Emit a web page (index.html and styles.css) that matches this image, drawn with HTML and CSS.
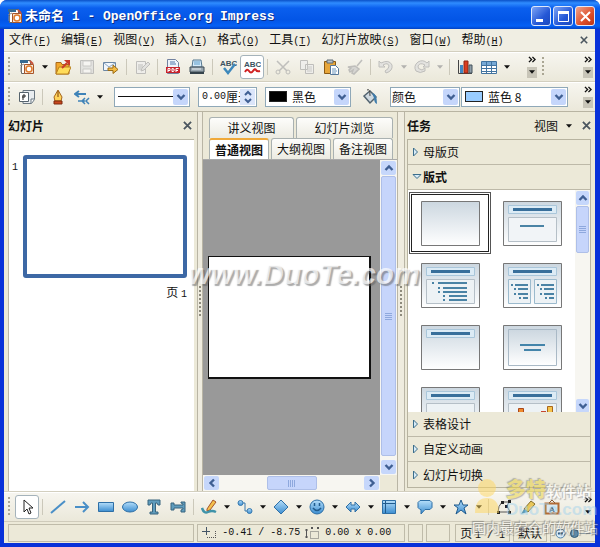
FILE: index.html
```html
<!DOCTYPE html>
<html lang="zh-CN">
<head>
  <meta charset="UTF-8">
  <title>未命名 1 - OpenOffice.org Impress</title>
  <link rel="stylesheet" href="styles.css">
</head>
<body>

  <!-- shared shapes -->
  <svg class="defs" width="0" height="0" aria-hidden="true">
    <defs>
      <linearGradient id="sky" x1="0" y1="0" x2="0" y2="1"><stop offset="0" stop-color="#b5defa"/><stop offset="1" stop-color="#3b8dd0"/></linearGradient>
      <linearGradient id="page" x1="0" y1="0" x2="0" y2="1"><stop offset="0" stop-color="#ccd7e0"/><stop offset="1" stop-color="#ffffff"/></linearGradient>
    </defs>
    <symbol id="caret" viewBox="0 0 7 4"><path d="M0 0h7L3.500 4z" fill="currentColor"/></symbol>
    <symbol id="down" viewBox="0 0 10 10"><path d="M1.500 3l3.500 3.500L8.500 3" fill="none" stroke="#3f5f93" stroke-width="2.400"/></symbol>
    <symbol id="close" viewBox="0 0 10 10"><path d="M1 1l8 8M9 1l-8 8" stroke="#4b565f" stroke-width="2"/></symbol>
    <symbol id="more" viewBox="0 0 9 8"><path d="M1 1l3 3-3 3M5 1l3 3-3 3" fill="none" stroke="#111" stroke-width="1.600"/></symbol>
    <symbol id="fold" viewBox="0 0 8 10"><path d="M1.500 1v8l4-4z" fill="#d8ecf8" stroke="#3c6e8c"/></symbol>
    <symbol id="newdoc" viewBox="0 0 16 16"><path d="M2.500 1.500h9v13h-9z" fill="#fff" stroke="#666"/><path d="M1 1h8v3H1z" fill="#376b93"/><path d="M1 7l4-2M2 8v5" stroke="#888"/><path d="M5.500 5.500h9v9h-9z" fill="#f3e6d8" stroke="#a8562a"/><circle cx="10" cy="10" r="3" fill="#fff" stroke="#e07b2c" stroke-width="1.500"/><path d="M11 2l3 3" stroke="#c8523a" stroke-width="2"/></symbol>
  </svg>

  <div class="window">
    <header class="title-bar">
      <svg class="app-icon" width="16" height="16"><use href="#newdoc"/></svg>
      <h1>未命名<span> 1 - OpenOffice.org Impress</span></h1>
      <button class="win-btn" aria-label="最小化"><svg width="19" height="19"><path d="M4 12h7v3H4z" fill="#fff"/></svg></button>
      <button class="win-btn" aria-label="最大化"><svg width="19" height="19"><path d="M4.500 5.500h10v9h-10z" fill="none" stroke="#fff"/><path d="M4 4h11v3H4z" fill="#fff"/></svg></button>
      <button class="win-btn win-close" aria-label="关闭"><svg width="19" height="19"><path d="M5 5l9 9M14 5l-9 9" stroke="#fff" stroke-width="2"/></svg></button>
    </header>

    <nav class="menu-bar">
      <button>文件<span>(<u>F</u>)</span></button>
      <button>编辑<span>(<u>E</u>)</span></button>
      <button>视图<span>(<u>V</u>)</span></button>
      <button>插入<span>(<u>I</u>)</span></button>
      <button>格式<span>(<u>O</u>)</span></button>
      <button>工具<span>(<u>T</u>)</span></button>
      <button>幻灯片放映<span>(<u>S</u>)</span></button>
      <button>窗口<span>(<u>W</u>)</span></button>
      <button>帮助<span>(<u>H</u>)</span></button>
      <button class="push" aria-label="关闭文档"><svg width="8" height="8"><use href="#close"/></svg></button>
    </nav>

    <div class="toolbar">
      <span class="grip"></span>
      <button class="tool" aria-label="新建"><svg width="16" height="16"><use href="#newdoc"/></svg></button>
      <button class="drop" aria-label="新建选项"><svg width="6" height="4"><use href="#caret"/></svg></button>
      <button class="tool" aria-label="打开"><svg width="16" height="16"><path d="M1 3.500h5l1 2h7V15H1z" fill="#f2a72c" stroke="#a8681a"/><path d="M1 15l3-7h12l-3 7z" fill="#ffdc5a" stroke="#b9821f"/><path d="M7 9l5-5" stroke="#c93b2b" stroke-width="2"/><path d="M9 1h6v6z" fill="#c93b2b"/></svg></button>
      <button class="tool off" aria-label="保存"><svg width="16" height="16"><path d="M1.500 1.500h13v13h-13z" fill="#ddd" stroke="#aaa"/><path d="M4 2h8v5H4zM4 10h8v4H4z" fill="#f8f8f8" stroke="#bbb"/></svg></button>
      <button class="tool" aria-label="电子邮件"><svg width="16" height="16"><path d="M.5 3.500h12v8H.5z" fill="#f1f6fb" stroke="#6b87a5"/><path d="M1 4l5 4 6-4" fill="none" stroke="#8ea9c4"/><path d="M5 9h5V6l5 4.500-5 4v-3H5z" fill="#f5bd45" stroke="#9a6b14"/></svg></button>
      <span class="sep"></span>
      <button class="tool off" aria-label="编辑文件"><svg width="16" height="16"><path d="M2.500 2.500h9v12h-9z" fill="#eee" stroke="#aaa"/><path d="M4 6h5M4 8h5M4 10h3M7 12l1-3 6-6 2 2-6 6z" fill="#ddd" stroke="#aaa"/></svg></button>
      <span class="sep"></span>
      <button class="tool" aria-label="导出为 PDF"><svg width="16" height="16"><path d="M2.500.5h8l3 3v11h-11z" fill="#eef3fa" stroke="#7282a0"/><path d="M5 3h5M5 5h6" stroke="#4f75a8"/><path d="M1 8h14v6H1z" fill="#c8232c"/><path d="M3 13V9.500h2v2H3M7 9.500v3h1.500l.5-.5v-2zM11 13V9.500h2.500M11 11.500h2" fill="none" stroke="#fff"/></svg></button>
      <button class="tool" aria-label="打印"><svg width="16" height="16"><path d="M4 1h8l1 7H3z" fill="#d5eafa" stroke="#557891"/><path d="M5 3h6M5 5h6" stroke="#5a9bc8"/><path d="M1 8h14v5H1z" fill="#9aa7b0" stroke="#3e4d57"/><path d="M1 13h14v2H1z" fill="#34424b"/><path d="M3 10h9" stroke="#e8eef2"/></svg></button>
      <span class="sep"></span>
      <button class="tool" aria-label="拼写检查"><svg width="18" height="18"><text x="1" y="8" class="abc">ABC</text><path d="M5 10l4 5 7-9" fill="none" stroke="#3d88bb" stroke-width="2.500"/></svg></button>
      <button class="tool active" aria-label="自动拼写检查"><svg width="18" height="18"><text x="1" y="9" class="abc">ABC</text><path d="M2 14q2-4 4-1t4 0 3-1 4 1" fill="none" stroke="#d02222" stroke-width="2"/></svg></button>
      <span class="sep"></span>
      <button class="tool off" aria-label="剪切"><svg width="16" height="16"><path d="M2 2l10 10M14 2L4 12" stroke="#aaa" stroke-width="1.500"/><circle cx="3" cy="13" r="2" fill="none" stroke="#aaa"/><circle cx="13" cy="13" r="2" fill="none" stroke="#aaa"/></svg></button>
      <button class="tool off" aria-label="复制"><svg width="16" height="16"><path d="M1.500 1.500h7v9h-7zM6.500 5.500h8v9h-8z" fill="#eee" stroke="#aaa"/><path d="M8 8h5M8 10h5M8 12h5" stroke="#bbb"/></svg></button>
      <button class="tool" aria-label="粘贴"><svg width="16" height="16"><path d="M1.500 2.500h11v12h-11z" fill="#e7a63a" stroke="#8a5a15"/><path d="M4 1h6v3H4z" fill="#b8c3cb" stroke="#5e6b75"/><path d="M7.500 6.500h5l3 3v6h-8z" fill="#fff" stroke="#56789a"/><path d="M9 10h4M9 12h5M9 14h4" stroke="#6a96bd"/></svg></button>
      <button class="tool off" aria-label="格式刷"><svg width="16" height="16"><path d="M15 1l-5 6M1 8l7-1 4 3-5 5-2-1 1-3-3 2-1-2 2-2z" fill="#ccc" stroke="#aaa" stroke-width="1.500"/></svg></button>
      <span class="sep"></span>
      <button class="tool off" aria-label="撤消"><svg width="16" height="16"><path d="M1 2v6h6L5 6q5-3 6 1 0 3-4 5l1 2q7-2 6-8Q11 0 3 4z" fill="#ddd" stroke="#aaa"/></svg></button>
      <button class="drop off" aria-label="撤消选项"><svg width="6" height="4"><use href="#caret"/></svg></button>
      <button class="tool off" aria-label="恢复"><svg width="16" height="16"><path d="M15 2v6H9l2-2Q6 3 4 7q-1 3 4 4l3-2v3q-5 3-9 0-3-5 2-9 5-3 9 1z" fill="#ddd" stroke="#aaa"/></svg></button>
      <button class="drop off" aria-label="恢复选项"><svg width="6" height="4"><use href="#caret"/></svg></button>
      <span class="sep"></span>
      <button class="tool" aria-label="图表"><svg width="16" height="16"><path d="M1.500 1v13.500H15" fill="none" stroke="#444"/><path d="M3 6h3v8H3z" fill="#3f86c4"/><path d="M7 2h4v12H7z" fill="#d93c20" stroke="#8d2415"/><path d="M12 6h3v8h-3z" fill="#8f9ea9" stroke="#45525c"/></svg></button>
      <button class="tool" aria-label="表格"><svg width="16" height="16"><path d="M.5 2.500h15v12H.5z" fill="#fff" stroke="#4274a0"/><path d="M1 3h14v3H1z" fill="#77a9d5"/><path d="M1 6.500h14M1 9.500h14M1 12.500h14M5.500 3v11M10.500 3v11" stroke="#4274a0"/></svg></button>
      <button class="drop" aria-label="表格选项"><svg width="6" height="4"><use href="#caret"/></svg></button>
      <button class="overflow push" aria-label="更多"><svg width="8" height="7"><use href="#more"/></svg><svg width="6" height="4"><use href="#caret"/></svg></button>
      <span class="grip"></span>
      <button class="overflow last" aria-label="更多工具"><svg width="8" height="7"><use href="#more"/></svg><svg width="6" height="4"><use href="#caret"/></svg></button>
    </div>

    <div class="toolbar">
      <span class="grip"></span>
      <button class="tool" aria-label="样式和格式"><svg width="16" height="16"><path d="M4 1.500h11.500v9l-3 4H4z" fill="#e9edf0" stroke="#697680"/><path d="M.5 3.500h9v9h-9z" fill="#fff" stroke="#56636d"/><path d="M4 11V6h2v2H3" fill="none" stroke="#222"/><path d="M12 14v-4h3" fill="#fff" stroke="#697680"/></svg></button>
      <span class="sep"></span>
      <button class="tool" aria-label="线条"><svg width="16" height="16"><path d="M8 1l4 7-1 4H5L4 8z" fill="#ffd35a" stroke="#a5641b"/><path d="M8 2v6" stroke="#7a3c0a"/><path d="M4 12h8v3H4z" fill="#c9481f" stroke="#7c2a10"/></svg></button>
      <button class="tool" aria-label="箭头样式"><svg width="16" height="16"><path d="M1 5h11M5 2L1 5l4 3" fill="none" stroke="#3f83b8" stroke-width="2"/><path d="M4 12h7M11 9l-3 3 3 3M15 9l-3 3 3 3" fill="none" stroke="#3f83b8" stroke-width="1.500"/></svg></button>
      <button class="drop" aria-label="箭头选项"><svg width="6" height="4"><use href="#caret"/></svg></button>
      <span class="combo combo-line">
        <span class="line-sample"></span>
        <select aria-label="线条样式"><option></option></select>
        <span class="arrow"><svg width="10" height="10"><use href="#down"/></svg></span>
      </span>
      <span class="combo combo-size">
        <label class="unit"><input type="text" value="0.00" aria-label="线宽">厘米</label>
        <span class="spin">
          <button aria-label="增加"><svg width="8" height="6"><path d="M1 5l3-3 3 3" fill="none" stroke="#3f5f93" stroke-width="2"/></svg></button>
          <button aria-label="减少"><svg width="8" height="6"><path d="M1 1l3 3 3-3" fill="none" stroke="#3f5f93" stroke-width="2"/></svg></button>
        </span>
      </span>
      <span class="combo combo-color">
        <span class="swatch black"></span>
        <select aria-label="线条颜色"><option>黑色</option></select>
        <span class="arrow"><svg width="10" height="10"><use href="#down"/></svg></span>
      </span>
      <button class="tool bucket" aria-label="填充"><svg width="16" height="16"><path d="M2 7l6-5 6 6-6 6z" fill="#cfd9e0" stroke="#52636f" stroke-width="1.500"/><path d="M5 1q3-2 3 6" fill="none" stroke="#444"/><path d="M10 4q5 0 5 11-3-1-3-6z" fill="#3f7cab"/></svg></button>
      <span class="combo combo-fill">
        <select aria-label="填充样式"><option>颜色</option></select>
        <span class="arrow"><svg width="10" height="10"><use href="#down"/></svg></span>
      </span>
      <span class="combo combo-blue">
        <span class="swatch blue"></span>
        <select aria-label="填充颜色"><option>蓝色 8</option></select>
        <span class="arrow"><svg width="10" height="10"><use href="#down"/></svg></span>
      </span>
      <button class="overflow push last" aria-label="更多格式"><svg width="8" height="7"><use href="#more"/></svg><svg width="6" height="4"><use href="#caret"/></svg></button>
    </div>

    <main class="workspace">
      <section class="slides">
        <div class="pane-head">
          <h2>幻灯片</h2>
          <button class="push" aria-label="关闭幻灯片窗格"><svg width="9" height="9"><use href="#close"/></svg></button>
        </div>
        <div class="slide-list">
          <span class="mono">1</span>
          <figure>
            <div class="slide-thumb"></div>
            <figcaption>页 <span class="mono">1</span></figcaption>
          </figure>
        </div>
      </section>

      <div class="splitter"><span></span></div>

      <section class="editor">
        <div class="tabs tabs-back">
          <button>讲义视图</button>
          <button>幻灯片浏览</button>
        </div>
        <div class="tabs tabs-front">
          <button class="current">普通视图</button>
          <button>大纲视图</button>
          <button>备注视图</button>
        </div>
        <div class="stage">
          <div class="canvas"><div class="slide"></div></div>
          <div class="scroll-v">
            <button aria-label="向上"><svg class="flip" width="10" height="10"><use href="#down"/></svg></button>
            <span class="thumb"></span>
            <button aria-label="向下"><svg width="10" height="10"><use href="#down"/></svg></button>
          </div>
          <div class="scroll-h">
            <button aria-label="向左"><svg class="turn-left" width="10" height="10"><use href="#down"/></svg></button>
            <span class="thumb"></span>
            <button aria-label="向右"><svg class="turn-right" width="10" height="10"><use href="#down"/></svg></button>
          </div>
        </div>
      </section>

      <div class="splitter"><span></span></div>

      <aside class="tasks">
        <div class="pane-head">
          <h2>任务</h2>
          <button class="push view-menu">视图<svg width="6" height="4"><use href="#caret"/></svg></button>
          <button aria-label="关闭任务窗格"><svg width="9" height="9"><use href="#close"/></svg></button>
        </div>
        <div class="accordion">
          <button class="fold"><svg width="8" height="10"><use href="#fold"/></svg>母版页</button>
          <button class="fold open"><svg width="10" height="8"><path d="M1 1.500h8l-4 4z" fill="#d8ecf8" stroke="#3c6e8c"/></svg>版式</button>
          <div class="layouts">
            <div class="layout-grid">
              <button class="selected" aria-label="空白幻灯片"><svg width="59" height="45"><path d="M.5.5h58v44H.5z" fill="url(#page)" stroke="#777"/></svg></button>
              <button aria-label="标题幻灯片"><svg width="59" height="45"><path d="M.5.5h58v44H.5z" fill="url(#page)" stroke="#777"/><path d="M5.500 4.500h48v8h-48z" fill="#dcebf5" stroke="#a9c6da"/><path d="M10 8.500h39" stroke="#386f9b" stroke-width="3"/><path d="M5.500 16.500h48v24h-48z" fill="#f1f4f7" stroke="#b5bfc7"/><path d="M17 25h24" stroke="#4a83a5" stroke-width="2"/></svg></button>
              <button aria-label="标题，文字"><svg width="59" height="45"><path d="M.5.5h58v44H.5z" fill="url(#page)" stroke="#777"/><path d="M5.500 4.500h48v8h-48z" fill="#dcebf5" stroke="#a9c6da"/><path d="M10 8.500h39" stroke="#386f9b" stroke-width="3"/><path d="M5.500 16.500h48v24h-48z" fill="#edf2f5" stroke="#b5bfc7"/><path d="M11 20h2M17 20h29M17 25h2M22 25h24M17 29h2M22 29h24M22 33h2M28 33h18M22 37h2M28 37h18" stroke="#4a83a5" stroke-width="2"/></svg></button>
              <button aria-label="标题，两栏文字"><svg width="59" height="45"><path d="M.5.5h58v44H.5z" fill="url(#page)" stroke="#777"/><path d="M5.500 4.500h48v8h-48z" fill="#dcebf5" stroke="#a9c6da"/><path d="M10 8.500h39" stroke="#386f9b" stroke-width="3"/><path d="M5.500 16.500h22v24h-22zM31.500 16.500h22v24h-22z" fill="#edf2f5" stroke="#9bbacd"/><path d="M8 22h2M12 22h13M11 26h2M15 26h10M11 31h2M15 31h10M16 35h2M20 35h5M34 22h2M38 22h13M37 26h2M41 26h10M37 31h2M41 31h10M42 35h2M46 35h5" stroke="#4a83a5" stroke-width="2"/></svg></button>
              <button aria-label="只有标题"><svg width="59" height="45"><path d="M.5.5h58v44H.5z" fill="url(#page)" stroke="#777"/><path d="M5.500 4.500h48v8h-48z" fill="#dcebf5" stroke="#a9c6da"/><path d="M10 8.500h39" stroke="#386f9b" stroke-width="3"/></svg></button>
              <button aria-label="居中文字"><svg width="59" height="45"><path d="M.5.5h58v44H.5z" fill="url(#page)" stroke="#777"/><path d="M5.500 4.500h48v36h-48z" fill="url(#page)" stroke="#a9b9c6"/><path d="M17 20h25M21 25h17" stroke="#4384aa" stroke-width="2"/></svg></button>
              <button aria-label="标题，对象"><svg width="59" height="45"><path d="M.5.5h58v44H.5z" fill="url(#page)" stroke="#777"/><path d="M5.500 4.500h48v8h-48z" fill="#dcebf5" stroke="#a9c6da"/><path d="M10 8.500h39" stroke="#386f9b" stroke-width="3"/><path d="M5.500 16.500h48v24h-48z" fill="#edf2f5" stroke="#b5bfc7"/></svg></button>
              <button aria-label="标题，图表"><svg width="59" height="45"><path d="M.5.5h58v44H.5z" fill="url(#page)" stroke="#777"/><path d="M5.500 4.500h48v8h-48z" fill="#dcebf5" stroke="#a9c6da"/><path d="M10 8.500h39" stroke="#386f9b" stroke-width="3"/><path d="M5.500 16.500h48v24h-48z" fill="#edf2f5" stroke="#b5bfc7"/><path d="M15.500 21.500h5v16h-5z" fill="#f08a2c" stroke="#a9471b"/><path d="M38 24h5v13h-5z" fill="#c6472f"/><path d="M44.500 19.500h5v18h-5z" fill="#f5c34b" stroke="#a9661b"/></svg></button>
            </div>
            <div class="scroll-v">
              <button aria-label="向上滚动"><svg class="flip" width="10" height="10"><use href="#down"/></svg></button>
              <span class="thumb short"></span>
              <button aria-label="向下滚动"><svg width="10" height="10"><use href="#down"/></svg></button>
            </div>
          </div>
          <button class="fold"><svg width="8" height="10"><use href="#fold"/></svg>表格设计</button>
          <button class="fold"><svg width="8" height="10"><use href="#fold"/></svg>自定义动画</button>
          <button class="fold"><svg width="8" height="10"><use href="#fold"/></svg>幻灯片切换</button>
        </div>
      </aside>
    </main>

    <div class="toolbar drawing">
      <span class="grip"></span>
      <button class="tool active" aria-label="选择"><svg width="16" height="16"><path d="M5 1v12l3-3 2 5 2-1-2-5h4z" fill="#fff" stroke="#222"/></svg></button>
      <span class="sep"></span>
      <button class="tool" aria-label="直线"><svg width="16" height="16"><path d="M1 14L15 2" stroke="#4a8fc7" stroke-width="2"/></svg></button>
      <button class="tool" aria-label="箭头"><svg width="16" height="16"><path d="M1 8h13M9 3l5 5-5 5" fill="none" stroke="#4a8fc7" stroke-width="2"/></svg></button>
      <button class="tool" aria-label="矩形"><svg width="16" height="16"><path d="M.5 3.500h15v9H.5z" fill="url(#sky)" stroke="#2e6fa6"/></svg></button>
      <button class="tool" aria-label="椭圆"><svg width="16" height="16"><ellipse cx="8" cy="8" rx="7.500" ry="5" fill="url(#sky)" stroke="#2e6fa6"/></svg></button>
      <button class="tool" aria-label="文字"><svg width="16" height="16"><path d="M2 1h12v5h-2l-1-2H9.500v9H12v2H4v-2h2.500V4H5L4 6H2z" fill="#5f9cbd" stroke="#39657f"/></svg></button>
      <button class="tool" aria-label="竖排文字"><svg width="16" height="16"><path d="M15 3v10h-4v-2l2-1V9H4v2H1V4h3v2h9V5l-2-1V3z" fill="#5f9cbd" stroke="#39657f"/></svg></button>
      <span class="sep"></span>
      <button class="tool" aria-label="曲线"><svg width="16" height="16"><path d="M6 10L12 1l3 2-6 8-3 1z" fill="#f4c04c" stroke="#a5552b"/><path d="M1 9q2 6 6 4t8 0" fill="none" stroke="#3f93a9" stroke-width="2.500"/></svg></button>
      <button class="drop" aria-label="曲线选项"><svg width="6" height="4"><use href="#caret"/></svg></button>
      <button class="tool" aria-label="连接符"><svg width="16" height="16"><path d="M4 4h4v8h5" fill="none" stroke="#3679af"/><circle cx="3.500" cy="4" r="2.500" fill="url(#sky)" stroke="#3679af"/><circle cx="12.500" cy="12" r="2.500" fill="url(#sky)" stroke="#3679af"/></svg></button>
      <button class="drop" aria-label="连接符选项"><svg width="6" height="4"><use href="#caret"/></svg></button>
      <button class="tool" aria-label="基本形状"><svg width="16" height="16"><path d="M8 1l7 7-7 7-7-7z" fill="url(#sky)" stroke="#2e6fa6"/></svg></button>
      <button class="drop" aria-label="基本形状选项"><svg width="6" height="4"><use href="#caret"/></svg></button>
      <button class="tool" aria-label="符号形状"><svg width="16" height="16"><circle cx="8" cy="8" r="7" fill="url(#sky)" stroke="#2e6fa6"/><path d="M5.500 4v3M10.500 4v3M4 9q4 5 8 0" fill="none" stroke="#205b8d" stroke-width="1.500"/></svg></button>
      <button class="drop" aria-label="符号形状选项"><svg width="6" height="4"><use href="#caret"/></svg></button>
      <button class="tool" aria-label="箭头总汇"><svg width="16" height="16"><path d="M1 8l5-5v3h4V3l5 5-5 5v-3H6v3z" fill="url(#sky)" stroke="#2e6fa6"/></svg></button>
      <button class="drop" aria-label="箭头总汇选项"><svg width="6" height="4"><use href="#caret"/></svg></button>
      <button class="tool" aria-label="流程图"><svg width="16" height="16"><path d="M1.500 1.500h13v13h-13z" fill="url(#sky)" stroke="#2e6fa6"/><path d="M4.500 2v12M2 4.500h12" stroke="#205b8d"/></svg></button>
      <button class="drop" aria-label="流程图选项"><svg width="6" height="4"><use href="#caret"/></svg></button>
      <button class="tool" aria-label="图例"><svg width="16" height="16"><path d="M3 1.500h10l2 2v5l-2 2H8L4 15v-4.500H3l-2-2v-5z" fill="url(#sky)" stroke="#2e6fa6"/></svg></button>
      <button class="drop" aria-label="图例选项"><svg width="6" height="4"><use href="#caret"/></svg></button>
      <button class="tool" aria-label="星形"><svg width="16" height="16"><path d="M8 1l2 5h5l-4 3 2 6-5-4-5 4 2-6-4-3h5z" fill="url(#sky)" stroke="#205b8d"/></svg></button>
      <button class="drop" aria-label="星形选项"><svg width="6" height="4"><use href="#caret"/></svg></button>
      <span class="sep"></span>
      <button class="tool" aria-label="接点"><svg width="16" height="16"><path d="M2 13Q2 7 6 3h7l-2 4 3 6z" fill="none" stroke="#555"/><path d="M1 12h3v3H1zM5 2h3v3H5zM12 1h3v3h-3zM12 12h3v3h-3zM9 6h3v3H9z" fill="#222"/></svg></button>
      <button class="tool" aria-label="粘附点"><svg width="16" height="16"><path d="M4 10l7-8 4 3-7 8z" fill="#e8c75a" stroke="#85702c"/><path d="M1 15l3-5 4 3z" fill="#5e9bb5"/></svg></button>
      <button class="tool" aria-label="艺术字"><svg width="16" height="16"><path d="M1.500 4.500h13v10h-13z" fill="#d9e8f0" stroke="#b26b35" stroke-width="2"/><path d="M5 4l3-3 3 3" fill="none" stroke="#8a5a34"/><text x="5" y="13" class="abc">A</text></svg></button>
      <button class="overflow push" aria-label="更多绘图工具"><svg width="8" height="7"><use href="#more"/></svg><svg width="6" height="4"><use href="#caret"/></svg></button>
    </div>

    <footer class="status">
      <span class="cell info"></span>
      <span class="cell coords mono">
        <svg width="15" height="12"><path d="M4.500 0v8M0 4.500h8" stroke="#456"/><path d="M5 10.500h9M13.500 4v7" stroke="#555" stroke-dasharray="1 1"/></svg>
        <span>-0.41 / -8.75</span>
        <svg width="15" height="12"><path d="M1.500 2v9M0 3h3M0 10h3" stroke="#555"/><path d="M5.500 4.500h8v7h-8z" fill="none" stroke="#666" stroke-dasharray="1 1"/><path d="M6 1h2M12 1h2" stroke="#555" stroke-width="2"/></svg>
        <span>0.00 x 0.00</span>
      </span>
      <span class="cell blank"></span>
      <span class="cell blank wide"></span>
      <span class="cell">页 <span class="mono">1 / 1</span></span>
      <span class="cell">默认</span>
      <span class="cell zoom">
        <button aria-label="缩小"><svg width="11" height="11"><circle cx="5.500" cy="5.500" r="4.500" fill="#d9ecfa" stroke="#5183a9"/><path d="M3 5.500h5" stroke="#2d5e85" stroke-width="2"/></svg></button>
        <input type="range" min="0" max="100" value="0" aria-label="缩放">
      </span>
    </footer>

    <div class="mark mark-center">www.DuoTe.com</div>
    <div class="mark mark-corner">
      <svg width="30" height="34"><circle cx="15" cy="9" r="9" fill="#ffd75e"/><path d="M3 34q0-15 12-15t12 15z" fill="#ffd75e"/></svg>
      <p class="mark-name"><b>多特</b>软件站</p>
      <p class="mark-site">DuoTe.com</p>
      <p class="mark-slogan">国内最安全的软件站</p>
    </div>
  </div>

</body>
</html>
```
FILE: styles.css
```css
* {
  box-sizing: border-box;
}
body {
  margin: 0;
  font: 12px/16px "Noto Sans CJK SC", sans-serif;
  color: #111;
  background: #fff;
}
button,
input,
select {
  font: inherit;
  color: inherit;
  margin: 0;
  padding: 0;
  border: 0;
  background: none;
}
h1,
h2,
p,
figure {
  margin: 0;
}
svg {
  display: block;
  flex: none;
}
.defs {
  position: absolute;
}
.push {
  margin-left: auto;
}
.mono {
  font: 10px/16px "Liberation Mono", monospace;
}
.abc {
  font: bold 8px "Liberation Sans", sans-serif;
  fill: #3c5361;
}

/* window */
.window {
  position: relative;
  display: flex;
  flex-direction: column;
  min-height: 100vh;
  padding: 0 5px 4px 4px;
  background: #0831d9;
  border-radius: 7px 7px 0 0;
  overflow: hidden;
}
.title-bar {
  display: flex;
  align-items: center;
  gap: 2px;
  height: 29px;
  margin: 0 -5px 0 -4px;
  padding: 3px 5px 0 7px;
  background: linear-gradient(#0a51c8, #2f8cff 3px, #0a5fee 8px, #0355e6 20px, #0560f5 26px, #0343c4);
}
.title-bar h1 {
  flex: 1;
  color: #fff;
  font-size: 13px;
  line-height: 16px;
  text-shadow: 1px 1px 0 #0a2c86;
  white-space: pre;
}
.title-bar h1 span {
  font-family: "Liberation Mono", monospace;
}
.win-btn {
  width: 20px;
  height: 20px;
  border: 1px solid #dfe9fb;
  border-radius: 3px;
  background: linear-gradient(135deg, #7da4f5, #2457d6 60%, #1c49bd);
}
.win-close {
  background: linear-gradient(135deg, #f0a48c, #dd4f2b 60%, #bb3414);
}

/* menu and toolbars */
.menu-bar {
  display: flex;
  align-items: center;
  gap: 10px;
  height: 22px;
  padding: 0 7px 0 5px;
  background: #f0eee3;
}
.menu-bar button {
  white-space: nowrap;
}
.menu-bar span {
  font: 10px/16px "Liberation Mono", monospace;
}
.toolbar {
  display: flex;
  align-items: center;
  height: 30px;
  padding: 0 2px 0 4px;
  border-top: 1px solid #d3cfbf;
  box-shadow: inset 0 1px #fff;
  background: linear-gradient(#f7f6f0, #ebe8da);
}
.grip {
  width: 2px;
  height: 20px;
  margin-right: 5px;
  background: repeating-linear-gradient(#aaa694 0 2px, transparent 2px 4px);
}
.tool {
  display: grid;
  place-items: center;
  flex: none;
  width: 24px;
  height: 24px;
}
.tool.active {
  background: #fff;
  border: 1px solid #a5b3bb;
  border-radius: 3px;
}
.off {
  opacity: 0.7;
}
.drop {
  display: grid;
  place-items: center;
  flex: none;
  width: 12px;
  height: 24px;
}
.drop.off {
  color: #999;
}
.sep {
  flex: none;
  width: 1px;
  height: 16px;
  margin: 0 3px;
  background: #cbc8ba;
}
.overflow {
  display: flex;
  flex-direction: column;
  align-items: center;
  justify-content: space-between;
  width: 10px;
  height: 22px;
  padding-bottom: 4px;
  margin-right: 5px;
  background: linear-gradient(transparent 50%, #c8c5b8 50%);
}
.overflow.last {
  margin-right: 0;
  margin-left: 34px;
}
.overflow.push.last {
  margin-left: auto;
}
.drawing .overflow {
  margin-right: 0;
  background: none;
}

/* combo boxes */
.combo {
  display: flex;
  align-items: center;
  flex: none;
  height: 20px;
  margin-left: 8px;
  padding: 1px;
  border: 1px solid #8fa8b8;
  background: #fff;
}
.combo select {
  flex: 1;
  min-width: 0;
  appearance: none;
  outline: 0;
}
.arrow {
  display: grid;
  place-items: center;
  width: 15px;
  height: 16px;
  border-radius: 2px;
  background: #c5d6fb;
  pointer-events: none;
}
.combo-line {
  width: 76px;
}
.line-sample {
  width: 55px;
  height: 1px;
  margin-left: 2px;
  background: #111;
}
.combo-size {
  width: 59px;
}
.unit {
  display: flex;
  flex: 1;
  min-width: 0;
  padding-left: 2px;
  overflow: hidden;
  white-space: nowrap;
}
.unit input {
  flex: none;
  width: 24px;
  font: 10px/16px "Liberation Mono", monospace;
}
.spin {
  display: grid;
  width: 15px;
  height: 16px;
  background: #dbe5fa;
}
.spin button {
  display: grid;
  place-items: center;
}
.combo-color {
  width: 86px;
}
.swatch {
  width: 18px;
  height: 11px;
  margin: 0 5px 0 2px;
  border: 1px solid #222;
}
.black {
  background: #000;
}
.blue {
  background: #99ccff;
}
.bucket {
  margin-left: 7px;
}
.combo-fill {
  width: 70px;
}
.combo-blue {
  width: 107px;
  margin-left: 1px;
}

/* workspace */
.workspace {
  display: grid;
  grid-template-columns: 193px 6px minmax(0, 1fr) 8px 190px;
  flex: 1;
  border-top: 1px solid #b8b4a2;
  background: #ece9d8;
}
.pane-head {
  display: flex;
  align-items: center;
  gap: 10px;
  height: 27px;
}
.pane-head h2 {
  font-size: 12px;
  line-height: 16px;
}
.slides {
  display: flex;
  flex-direction: column;
  padding: 0 3px 0 4px;
}
.slides .pane-head {
  padding-right: 2px;
}
.slide-list {
  display: flex;
  flex: 1;
  gap: 5px;
  padding: 15px 7px 0 3px;
  border: 1px solid #bbb7a6;
  border-width: 1px 0 0 1px;
  background: #fff;
}
.slide-list > .mono {
  padding-top: 5px;
}
.slide-list figure {
  flex: 1;
}
.slide-thumb {
  aspect-ratio: 4 / 3;
  border: 4px solid #3d68a5;
  border-radius: 3px;
}
.slide-list figcaption {
  padding-top: 6px;
  text-align: right;
}
.splitter {
  display: grid;
  place-items: center;
  border: 1px solid #b9b5a5;
  border-width: 0 1px;
  background: #efecdf;
}
.splitter span {
  width: 2px;
  height: 32px;
  background: repeating-linear-gradient(#8d8a7c 0 2px, transparent 2px 4px);
}
.editor {
  display: flex;
  flex-direction: column;
}
.tabs {
  display: flex;
  gap: 2px;
  padding: 0 4px 0 6px;
}
.tabs button {
  flex: 1 1 auto;
  height: 21px;
  border: 1px solid #a9b1b1;
  border-bottom: 0;
  border-radius: 3px 3px 0 0;
  background: linear-gradient(#fdfdfb, #ecebe2);
}
.tabs-back {
  padding-top: 5px;
}
.tabs-front {
  border-bottom: 1px solid #aaa;
}
.tabs button.current {
  border-top: 2px solid #f0a93a;
  background: #fff;
  font-weight: bold;
}
.stage {
  display: grid;
  grid-template: 1fr 16px / 1fr 17px;
  flex: 1;
}
.canvas {
  display: grid;
  place-items: center;
  padding: 0 9px 0 5px;
  background: #999;
}
.slide {
  width: 100%;
  aspect-ratio: 4 / 3;
  border: 1px solid #111;
  border-width: 1px 2px 2px 1px;
  background: #fff;
}
.scroll-v,
.scroll-h {
  display: flex;
  gap: 1px;
  padding: 1px;
  background: #f7f6f1;
}
.scroll-v {
  flex-direction: column;
}
.scroll-v button,
.scroll-h button {
  display: grid;
  place-items: center;
  flex: none;
  width: 15px;
  height: 14px;
  border-radius: 2px;
  background: #c6d7fb;
}
.thumb {
  flex: 1;
  border: 1px solid #aebfe8;
  border-radius: 2px;
  background: repeating-linear-gradient(#8ea8dd 0 1px, transparent 1px 2px) center / 7px 7px no-repeat, #c6d5fb;
}
.thumb.short {
  flex: 0 0 47px;
  margin-bottom: auto;
}
.stage .scroll-v .thumb {
  margin-bottom: 3px;
}
.scroll-h .thumb {
  flex: 0 0 50px;
  margin: 0 auto;
  background: repeating-linear-gradient(90deg, #8ea8dd 0 1px, transparent 1px 2px) center / 7px 7px no-repeat, #c6d5fb;
}
.flip {
  transform: rotate(180deg);
}
.turn-left {
  transform: rotate(90deg);
}
.turn-right {
  transform: rotate(-90deg);
}

/* task pane */
.tasks {
  display: flex;
  flex-direction: column;
  padding: 0 4px 3px 2px;
}
.view-menu {
  display: flex;
  align-items: center;
  gap: 8px;
}
.accordion {
  display: flex;
  flex-direction: column;
  flex: 1;
  border: 1px solid #b7b3a0;
}
.fold {
  display: flex;
  align-items: center;
  gap: 3px;
  height: 25px;
  padding-left: 4px;
  border-bottom: 1px solid #bdb9a8;
}
.fold:last-child {
  border-bottom: 0;
}
.fold.open {
  gap: 1px;
  font-weight: bold;
}
.layouts {
  display: grid;
  grid-template-columns: 1fr 15px;
  flex: 1 1 0;
  min-height: 0;
  overflow: hidden;
  background: #fff;
}
.layouts .scroll-v button {
  width: 13px;
}
.layout-grid {
  display: grid;
  grid-template-columns: repeat(2, 82px);
  grid-auto-rows: 62px;
  height: 224px;
  padding: 2px 0 0 1px;
  overflow: hidden;
}
.layout-grid button {
  display: grid;
  place-items: center;
}
.layout-grid .selected {
  border: 3px double #222;
  outline: 1px solid #555;
  outline-offset: -1px;
}

/* status bar */
.status {
  display: flex;
  gap: 3px;
  height: 22px;
  padding: 2px 0 1px 4px;
  border-top: 1px solid #cfcbbb;
  background: #ece9d8;
}
.cell {
  padding: 0 4px;
  border: 1px solid #bfbba9;
  white-space: pre;
}
.info {
  flex: 1;
}
.coords {
  display: flex;
  align-items: center;
  gap: 5px;
  width: 208px;
}
.blank {
  width: 15px;
}
.blank.wide {
  width: 24px;
  margin-right: 2px;
}
.zoom {
  display: flex;
  align-items: center;
  gap: 4px;
  width: 45px;
  border-right: 0;
  padding-right: 0;
}
.zoom input {
  flex: 1;
  min-width: 0;
  height: 12px;
  appearance: none;
  background: linear-gradient(#8d9aa0, #8d9aa0) center / 100% 1px no-repeat;
}
.zoom input::-webkit-slider-thumb {
  appearance: none;
  width: 9px;
  height: 9px;
  border: 1px solid #345b75;
  border-radius: 5px;
  background: #5f8dab;
}

/* watermarks lie over the window */
.mark {
  position: absolute;
  pointer-events: none;
  white-space: nowrap;
}
.mark-center {
  top: 258px;
  left: 188px;
  font: italic bold 29px/32px "Liberation Sans", sans-serif;
  color: rgba(255, 255, 255, 0.7);
  text-shadow: 2px 2px 1px rgba(90, 90, 90, 0.5);
}
.mark-corner {
  right: 2px;
  bottom: 12px;
  display: grid;
  grid-template-columns: 30px auto;
  column-gap: 4px;
  opacity: 0.5;
}
.mark-corner svg {
  grid-row: 1 / 3;
}
.mark-name {
  font: bold 15px/20px "Noto Sans CJK SC", sans-serif;
  color: #fff;
  text-shadow: 1px 1px 1px #777, -1px -1px 1px #777;
}
.mark-name b {
  font-size: 20px;
  color: #e7cf36;
}
.mark-site {
  font: bold 17px/18px "Liberation Sans", sans-serif;
  color: #a4d4ee;
}
.mark-slogan {
  grid-column: 1 / 3;
  font-size: 14px;
  line-height: 16px;
  color: #fff;
  text-shadow: 1px 1px 1px #555, -1px -1px 1px #555;
}
```
